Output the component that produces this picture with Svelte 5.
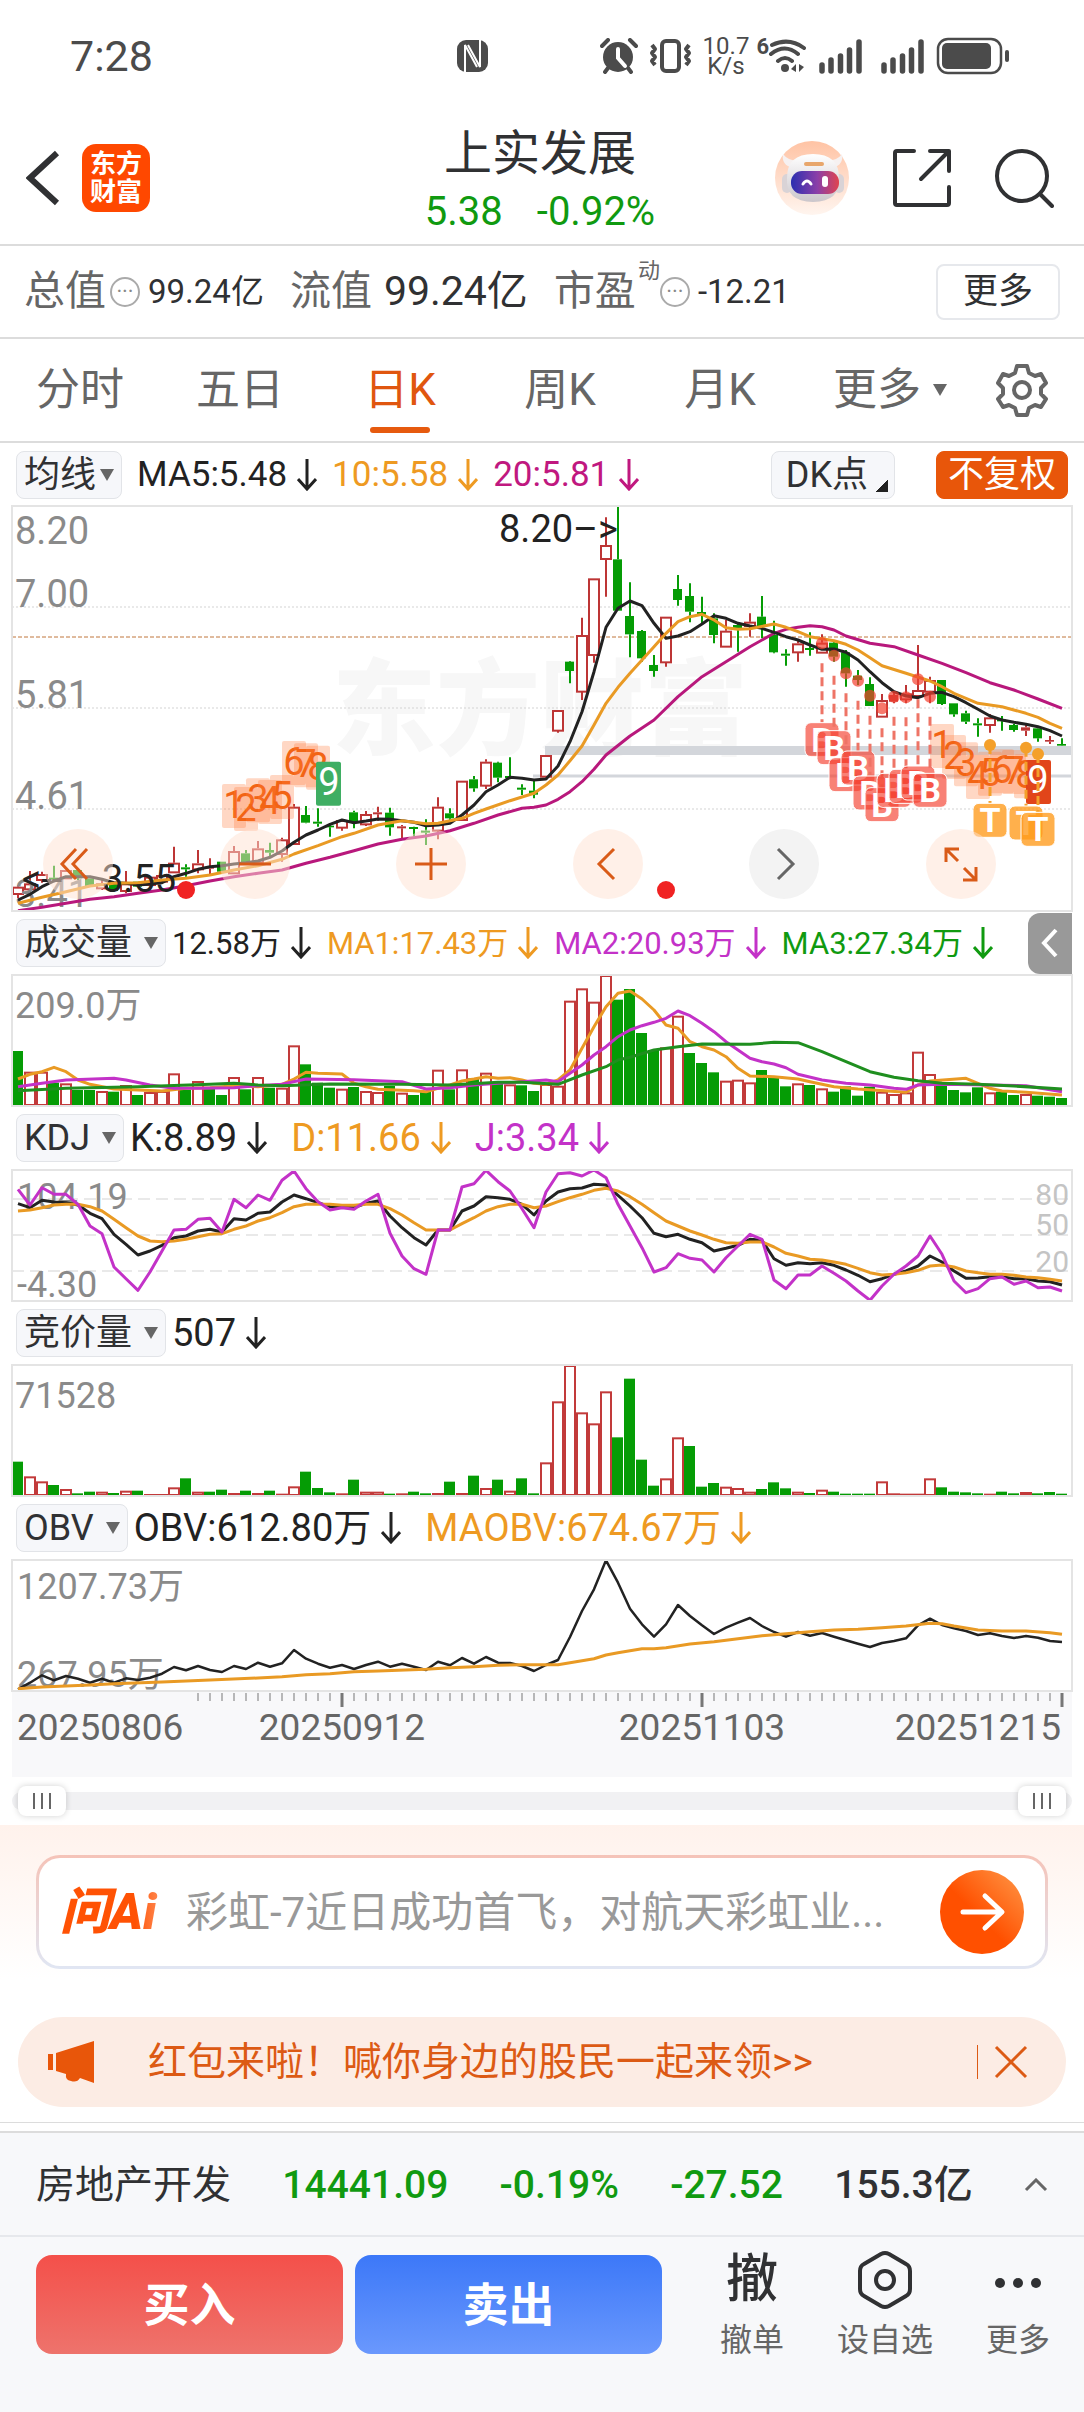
<script>
  const STEP = 12; // distance between two candles
  const cx = i => 6 + i * STEP;

  let tab = $state('日K'),
      from = $state(0),
      to = $state(100),
      question = $state(''),
      banner = $state(true);

  const tabs = ['分时', '五日', '日K', '周K', '月K'];

  // [colour, high, top, bottom, low], in thirds of a pixel, main chart starts at 48
  const candles = [
    ['r',1185,1190,1212,1225],['r',1143,1180,1198,1205],['r',1145,1152,1170,1178],['g',1127,1163,1169,1172],
    ['r',1140,1140,1165,1165],['g',1140,1140,1165,1170],['g',1165,1165,1190,1190],['r',1165,1180,1195,1200],
    ['g',1180,1180,1203,1203],['r',1143,1180,1203,1210],['g',1175,1175,1190,1190],['r',1160,1160,1185,1185],
    ['r',1155,1155,1175,1175],['r',1070,1118,1147,1147],['g',1123,1132,1138,1160],['r',1080,1120,1138,1150],
    ['r',1105,1131,1136,1155],['g',1115,1115,1145,1145],['r',1068,1083,1150,1150],['g',1080,1090,1122,1122],
    ['r',1053,1075,1118,1125],['g',1058,1080,1088,1102],['r',1043,1048,1092,1115],['r',942,950,1062,1062],
    ['g',948,975,998,1000],['g',955,995,1001,1010],['g',1005,1007,1012,1040],['r',987,990,1013,1022],
    ['g',962,967,993,1015],['r',963,972,1003,1008],['r',950,967,973,992],['g',953,968,1012,1037],
    ['r',1005,1009,1015,1045],['g',1010,1011,1017,1040],['g',988,1022,1028,1065],['r',922,950,1022,1048],
    ['g',955,970,985,993],['r',872,872,990,990],['g',858,868,895,905],['r',808,815,887,897],
    ['g',815,818,863,877],['g',802,858,864,868],['g',883,893,899,915],['g',870,902,914,925],
    ['r',795,795,860,860],['r',660,660,722,728],['g',513,515,543,580],['r',383,435,605,630],
    ['r',265,265,495,518],['r',82,165,207,320],['g',47,208,362,362],['g',277,378,433,502],
    ['g',420,423,505,515],['g',495,525,543,560],['r',380,380,517,530],['g',255,297,330,347],
    ['g',280,318,365,397],['g',320,366,374,403],['g',370,385,435,460],['r',390,422,470,470],
    ['g',400,405,420,485],['r',370,395,408,440],['g',318,380,408,445],['g',392,435,487,490],
    ['g',478,491,497,527],['r',450,460,487,515],['g',427,474,480,497],['r',433,458,488,488],
    ['g',455,458,500,515],['g',480,487,550,590],['g',540,557,570,585],['g',562,582,648,648],
    ['r',612,630,680,680],['f',605,615,635,640],['r',585,610,628,640],['r',465,600,618,618],
    ['r',560,570,605,640],['g',570,570,642,645],['g',640,640,673,680],['g',662,670,695,702],
    ['g',685,700,706,740],['r',672,682,705,728],['g',678,688,694,722],['g',702,705,720,725],
    ['f',700,712,722,738],['g',712,715,745,755],['f',738,750,755,762],['g',745,762,767,768]
  ];

  const ma5 = [1230,1213,1190,1173,1160,1160,1160,1168,1178,1180,1185,1182,1178,1160,1150,1138,1130,1127,1122,1118,1113,1102,
    1083,1057,1035,1020,1003,990,998,993,987,988,992,997,1007,1005,1000,975,945,905,885,862,865,870,867,828,755,665,545,412,
    355,333,347,400,445,438,425,402,377,385,400,408,415,427,440,450,465,478,477,487,510,545,578,605,618,623,610,607,620,638,
    658,678,690,697,703,710,722,738];
  const ma10 = [[0,1240],[2,1222],[4,1205],[6,1188],[8,1180],[10,1178],[12,1170],[14,1165],[16,1155],[18,1140],[20,1127],[22,1108],
    [23,1092],[25,1067],[27,1040],[28,1030],[30,1005],[32,992],[33,997],[34,1001],[35,1000],[36,992],[37,985],[38,970],[39,957],
    [41,932],[43,910],[44,885],[45,855],[46,812],[47,768],[48,705],[49,640],[50,592],[51,550],[52,510],[53,470],[54,430],[55,395],
    [56,380],[57,373],[58,390],[59,413],[60,418],[61,416],[63,402],[64,412],[65,425],[66,440],[68,452],[69,463],[70,480],[71,503],
    [72,527],[74,550],[76,573],[77,590],[78,610],[80,640],[82,650],[84,670],[85,682],[86,700],[87,715]];
  const ma20 = [[0,1262],[2,1252],[4,1240],[6,1228],[8,1220],[10,1210],[12,1200],[14,1187],[16,1173],[18,1160],[20,1150],[22,1140],
    [24,1120],[26,1102],[28,1082],[30,1062],[32,1048],[34,1038],[36,1022],[38,1000],[40,975],[42,955],[43,952],[44,945],[45,928],
    [46,905],[47,875],[48,838],[49,795],[51,738],[53,690],[55,620],[57,560],[59,515],[61,470],[63,430],[64,418],[65,412],[66,407],
    [67,410],[68,420],[69,438],[71,460],[73,470],[75,495],[77,520],[79,548],[81,578],[83,600],[85,627],[87,655]];

  // nine-turn counters: [candle, label, top]
  const turns = [[18,1,882],[19,2,891],[20,3,865],[21,4,870],[22,5,855],[23,6,753],[24,7,760],[25,8,767],
    [77,1,702],[78,2,735],[79,3,757],[80,4,795],[81,5,785],[82,6,778],[83,7,780],[84,8,793]];
  // buy marks: [candle, dot, badge top]
  const buys = [[67,460,698],[68,497,722],[69,550,803],[70,572,783],[71,617,858],[72,655,893],[73,620,850],[74,622,838],[75,568,828],[76,620,850]];
  const sells = [[81,765,940],[84,773,948],[85,792,967]];

  const volColor = 'grrgrggrgrgrrrgrggrgrgrrggg' + 'rgrrgrggrgrgrgrgg' + 'rrrrrrggggrrgggrrrggg' + 'rgrggggrrrrrggggrggrggg';
  const volume = [162,100,100,67,65,45,45,42,40,60,30,39,42,95,45,72,50,30,84,47,84,52,52,179,122,67,52,49,54,42,39,57,37,30,
    39,106,47,107,80,97,67,62,59,42,63,58,313,350,310,390,316,348,216,165,173,268,156,126,98,73,76,68,105,83,56,65,60,50,40,56,28,55,
    40,33,38,160,93,58,45,38,53,38,40,30,33,28,25,21];
  const vma1 = [[0,78],[1,92],[2,100],[3,113],[4,100],[5,75],[6,62],[8,48],[10,45],[12,42],[14,50],[16,52],[18,58],[20,55],[22,62],
    [23,78],[24,98],[25,95],[27,93],[28,65],[29,55],[30,47],[33,43],[34,40],[35,50],[36,60],[37,72],[38,78],[39,85],[40,80],[41,82],
    [42,75],[43,65],[44,62],[45,75],[46,105],[47,170],[48,235],[49,295],[50,335],[51,342],[52,318],[53,285],[54,240],[55,230],[56,190],
    [57,175],[58,165],[59,145],[60,110],[61,87],[63,85],[65,78],[66,70],[68,55],[70,48],[74,38],[75,60],[76,72],[79,80],[80,65],
    [81,50],[82,42],[84,38],[87,30]];
  const vma2 = [[0,55],[2,65],[4,75],[8,80],[9,75],[11,60],[13,50],[15,50],[18,52],[20,58],[22,62],[24,78],[28,76],[32,70],[34,48],
    [36,52],[38,60],[40,65],[42,70],[44,75],[45,70],[46,95],[47,120],[48,150],[49,175],[50,205],[51,225],[52,238],[53,248],[54,260],
    [55,282],[56,268],[57,245],[58,220],[59,190],[60,165],[61,140],[62,130],[63,123],[64,112],[65,92],[67,75],[69,65],[71,60],[73,50],
    [74,47],[75,60],[77,62],[84,58],[85,52],[87,40]];
  const vma3 = [[0,43],[4,50],[10,55],[16,62],[18,65],[20,60],[22,58],[26,63],[32,62],[36,60],[40,68],[42,68],[45,62],[47,90],[49,115],
    [50,135],[51,143],[53,165],[55,175],[57,183],[61,182],[63,188],[65,187],[67,160],[69,130],[71,100],[73,83],[75,73],[77,65],[80,62],
    [83,57],[87,48]];

  const kdjJ = [835,882,830,850,850,880,945,968,1068,1103,1138,1083,1020,957,955,925,922,963,865,890,852,868,808,780,833,872,897,890,
    895,870,850,967,1035,1073,1090,957,957,828,818,778,812,840,893,950,843,788,785,795,777,800,880,945,1010,1083,1070,1028,1042,1047,
    1083,1040,1005,970,985,1107,1133,1092,1092,1065,1087,1110,1140,1168,1125,1090,1065,1035,975,1030,1110,1145,1133,1103,1098,1120,
    1110,1130,1128,1140];
  const kdjK = [878,890,868,873,875,882,907,923,970,1000,1032,1020,1003,980,975,960,955,963,923,927,907,903,873,852,863,875,887,888,
    890,877,870,915,950,980,1002,957,957,900,885,857,860,865,880,912,870,843,833,831,820,822,853,885,920,967,977,970,985,995,1020,
    1012,1003,985,988,1043,1063,1055,1058,1055,1063,1077,1093,1112,1103,1090,1080,1065,1035,1053,1080,1102,1101,1097,1097,1103,1103,
    1110,1112,1122];
  const kdjD = [900,897,890,882,880,880,887,900,925,950,975,990,992,990,985,977,970,968,955,945,930,920,905,887,880,880,880,883,883,
    880,880,893,912,935,957,957,957,938,920,900,887,880,880,890,885,872,860,850,838,832,840,857,880,905,930,945,960,972,985,995,997,
    993,993,1008,1027,1035,1045,1047,1053,1060,1072,1085,1092,1090,1085,1078,1065,1062,1068,1080,1085,1090,1090,1093,1098,1100,1105,1110];

  const bids = [100,56,41,30,18,5,10,10,6,13,13,3,3,23,50,10,10,16,6,13,6,13,4,26,70,21,8,5,46,10,10,4,5,10,5,6,40,6,58,21,46,13,50,5,
    98,281,390,248,215,311,173,349,106,28,50,173,147,25,36,25,21,10,18,38,20,10,6,16,10,4,4,4,41,5,4,4,50,23,10,8,5,4,10,5,9,5,9,4];
  const bidColor = 'grrgrggrgrgrrrgrggrgrgrrggg' + 'rgrrgrggrgrgrgrgg' + 'rrrrrrggggrrgggrrrggg' + 'rgrggggrrrrrggggrggrggg';

  const obv = [1135,1115,1093,1108,1095,1103,1115,1103,1115,1102,1107,1100,1088,1068,1078,1065,1077,1083,1065,1074,1055,1067,1057,1017,
    1043,1058,1070,1062,1074,1062,1052,1067,1058,1067,1077,1052,1063,1041,1058,1038,1055,1056,1065,1080,1062,1047,978,900,835,748,815,
    893,940,977,940,882,915,943,969,950,935,921,945,963,977,963,974,966,977,988,998,1008,996,990,982,943,923,942,952,960,972,967,975,
    981,975,980,990,993];
  const maobv = [[0,1133],[2,1128],[4,1125],[6,1122],[8,1118],[12,1113],[16,1107],[20,1101],[22,1097],[24,1091],[26,1088],[28,1082],
    [30,1080],[34,1075],[36,1070],[38,1067],[40,1063],[42,1061],[45,1061],[46,1055],[48,1043],[49,1032],[50,1025],[52,1013],[53,1013],
    [54,1010],[56,999],[58,992],[60,983],[62,974],[64,968],[66,962],[68,957],[70,955],[72,950],[74,945],[76,937],[77,938],[78,945],
    [80,957],[82,960],[84,960],[86,965],[87,970]];

  const py = v => v / 3 - 16;
  const full = a => a.map((v, i) => [i, v]);
  const line = (pts, f) => pts.map(([i, v]) => `${cx(i)},${f(v).toFixed(1)}`).join(' ');
  const up = v => 130 - v / 3;     // volume scale
  const kd = v => (v - 777) / 3;   // kdj scale
  const ob = v => (v - 747) / 3;   // obv scale

  const ticks = Array.from({ length: 73 }, (_, n) => n + 15);
</script>

{#snippet arrow()}
  <svg class="arrow" viewBox="0 0 20 32" aria-hidden="true"><path d="M10 0V30M1 20l9 10 9-10" /></svg>
{/snippet}

{#snippet signal()}
  <svg class="signal" width="44" height="36" viewBox="0 0 44 36" aria-hidden="true">
    <path d="M3 27v6M12 22v11M21.500 18v15M30.500 12v21M40 4v29" stroke="#4b4b4b" stroke-width="5.500" stroke-linecap="round" />
  </svg>
{/snippet}

{#snippet bars(values, colors)}
  {#each values as v, i}
    {#if colors[i] === 'g'}
      <rect x={cx(i) - 6} y={up(v)} width="11" height={v / 3} fill="#059c05" />
    {:else}
      <rect x={cx(i) - 5} y={up(v) + 1} width="10" height={Math.max(v / 3 - 1, 1)} fill="#fff" stroke="#c23a3a" stroke-width="2" />
    {/if}
  {/each}
{/snippet}

<div class="page">
  <div class="status">
    <time>7:28</time>
    <svg class="nfc" width="31" height="32" viewBox="0 0 31 32" aria-label="NFC">
      <rect width="31" height="32" rx="9" fill="#4b4b4b" />
      <path d="M8 32V5L20 27M23 0V27L11 5" stroke="#fff" stroke-width="2" fill="none" />
    </svg>
    <div class="right">
      <svg width="38" height="36" viewBox="0 0 38 36" aria-hidden="true">
        <circle cx="18" cy="19" r="15" fill="#4b4b4b" />
        <path d="M2 8l6-6M30 2l6 6M8 30l-3 4M28 30l3 4" stroke="#4b4b4b" stroke-width="4" stroke-linecap="round" />
        <path d="M18 11v9l7 8" stroke="#fff" stroke-width="4" fill="none" stroke-linecap="round" />
      </svg>
      <svg width="43" height="36" viewBox="0 0 43 36" aria-hidden="true" fill="none" stroke="#4b4b4b" stroke-width="4">
        <rect x="13" y="3" width="17" height="30" rx="4" />
        <path d="M3 7l3 4-3 4 3 4-3 4 3 4M40 7l-3 4 3 4-3 4 3 4-3 4" stroke-linejoin="round" />
      </svg>
      <span class="speed">10.7<br />K/s</span>
      <span class="six">6</span>
      <svg width="40" height="36" viewBox="0 0 40 36" aria-hidden="true" fill="none" stroke="#4b4b4b" stroke-width="4" stroke-linecap="round">
        <path d="M4 7q17-8 32 3M3 16q14-11 27 0M10 23q7-6 14 0" />
        <circle cx="17" cy="30" r="4" fill="#4b4b4b" stroke="none" />
        <path d="M23 31l5-5v8ZM36 29l-5-3v8Z" fill="#4b4b4b" stroke="none" />
      </svg>
      {@render signal()}
      {@render signal()}
      <svg width="74" height="38" viewBox="0 0 74 38" aria-hidden="true">
        <rect x="2" y="2" width="63" height="34" rx="10" fill="none" stroke="#4b4b4b" stroke-width="2.500" />
        <rect x="6" y="6" width="49" height="26" rx="5" fill="#4b4b4b" />
        <path d="M71 15v8" stroke="#4b4b4b" stroke-width="4" stroke-linecap="round" />
      </svg>
    </div>
  </div>

  <header>
    <div class="side">
      <button class="plain" aria-label="返回">
        <svg width="34" height="56" viewBox="0 0 34 56"><path d="M31 3L4 28l27 25" fill="none" stroke="#303133" stroke-width="6" /></svg>
      </button>
      <a class="brand" href="#home">东方<br />财富</a>
    </div>
    <div class="title">
      <h1>上实发展</h1>
      <p><span>5.38</span><span>-0.92%</span></p>
    </div>
    <div class="side tools">
      <button class="plain" aria-label="智能助手">
        <svg width="76" height="76" viewBox="0 0 76 76">
          <defs>
            <linearGradient id="peach" x1="0" y1="0" x2="0" y2="1"><stop offset="0" stop-color="#ffc3a4" /><stop offset="1" stop-color="#fff5ef" /></linearGradient>
            <linearGradient id="visor" x1="0" y1="0" x2="1" y2="0"><stop offset="0" stop-color="#2b2fb0" /><stop offset=".55" stop-color="#8b3fa8" /><stop offset="1" stop-color="#e0434f" /></linearGradient>
            <linearGradient id="shell" x1="0" y1="0" x2="0" y2="1"><stop offset="0" stop-color="#fff" /><stop offset="1" stop-color="#cbc6cb" /></linearGradient>
          </defs>
          <circle cx="38" cy="38" r="37" fill="url(#peach)" />
          <path d="M19 28q-12-3-10-14 5 7 16 7ZM58 28q12-3 10-14-5 7-16 7Z" fill="#f6f1f1" />
          <rect x="8" y="34" width="10" height="19" rx="5" fill="#d9d3d6" /><rect x="60" y="34" width="10" height="19" rx="5" fill="#d9d3d6" />
          <path d="M13 38q0-24 26-24t26 24q2 23-26 24-28-1-26-24Z" fill="url(#shell)" />
          <rect x="17" y="31" width="48" height="23" rx="11" fill="url(#visor)" />
          <path d="M29 44q4-6 8 0" fill="none" stroke="#fff" stroke-width="3" stroke-linecap="round" />
          <rect x="48" y="36" width="6" height="11" rx="3" fill="#fff" />
          <rect x="30" y="22" width="20" height="4" rx="2" fill="#e8a66b" />
        </svg>
      </button>
      <button class="plain" aria-label="分享">
        <svg width="60" height="60" viewBox="0 0 60 60" fill="none" stroke="#303133" stroke-width="4" stroke-linecap="round" stroke-linejoin="round">
          <path d="M22 3H5q-2 0-2 2v50q0 2 2 2h50q2 0 2-2V39M38 3h19v20M56 4L29 31" />
        </svg>
      </button>
      <button class="plain" aria-label="搜索">
        <svg width="60" height="60" viewBox="0 0 60 60" fill="none" stroke="#303133" stroke-width="4" stroke-linecap="round">
          <circle cx="28" cy="28" r="25" /><path d="M46 46l12 12" />
        </svg>
      </button>
    </div>
  </header>

  <div class="stats">
    <span class="key">总值</span><i class="tip">···</i><span class="val">99.24亿</span>
    <span class="key next">流值</span><span class="val big">99.24亿</span>
    <span class="key next">市盈</span><sup>动</sup><i class="tip">···</i><span class="val">-12.21</span>
    <button class="more">更多</button>
  </div>

  <nav>
    {#each tabs as t}
      <button class="tab" class:on={tab === t} onclick={() => (tab = t)}>{t}</button>
    {/each}
    <button class="tab">更多<i class="caret"></i></button>
    <button class="tab" aria-label="设置">
      <svg width="54" height="54" viewBox="0 0 54 54" fill="none" stroke="#666" stroke-width="4" stroke-linejoin="round">
        <path d="M22 3h10l2 7 6 3 6-2 5 9-5 5v6l5 5-5 8-6-2-6 3-2 7H22l-2-7-6-3-6 2-5-8 5-5v-6l-5-5 5-9 6 2 6-3Z" />
        <circle cx="27" cy="27" r="8" />
      </svg>
    </button>
  </nav>

  <main>
    <div class="legend">
      <button class="chip tight">均线<i class="caret"></i></button>
      <span class="dark">MA5:5.48{@render arrow()}</span>
      <span class="orange">10:5.58{@render arrow()}</span>
      <span class="plum">20:5.81{@render arrow()}</span>
      <button class="chip dk">DK点</button>
      <button class="chip adjust">不复权</button>
    </div>

    <div class="stage">
      <svg class="plot" viewBox="0 0 1060 405">
        <text x="320" y="241" class="mark">东方财富</text>
        <path d="M0 101H1060M0 202H1060M0 303H1060" stroke="#d3d3d3" stroke-width="1" stroke-dasharray="2 2" />
        <rect x="533" y="240" width="527" height="9" fill="#d3d6db" />
        <path d="M521 270H1060" stroke="#d3d6db" stroke-width="3" />
        <path d="M0 131H1060" stroke="#c0763c" stroke-width="1" stroke-dasharray="4 2" />

        {#each candles as [c, high, top, bottom, low], i}
          {@const color = c === 'g' ? '#059c05' : '#bd3535'}
          <path d="M{cx(i)} {py(high)}V{py(top)}M{cx(i)} {py(bottom)}V{py(low)}" stroke={color} stroke-width="2" />
          {#if c === 'r' && bottom - top > 7}
            <rect x={cx(i) - 5} y={py(top) + 1} width="10" height={(bottom - top) / 3 - 1} fill="#fff" stroke={color} stroke-width="2" />
          {:else}
            <rect x={cx(i) - 5} y={py(top)} width="9" height={(bottom - top) / 3} fill={color} />
          {/if}
        {/each}

        <g class="label">
          <text x="3" y="38">8.20</text>
          <text x="3" y="101">7.00</text>
          <text x="3" y="202">5.81</text>
          <text x="3" y="303">4.61</text>
          <text x="3" y="401">3.41</text>
        </g>

        <g fill="none" stroke-width="3" stroke-linejoin="round">
          <polyline points={line(ma20, py)} stroke="#b8187c" />
          <polyline points={line(full(ma5), py)} stroke="#222" />
          <polyline points={line(ma10, py)} stroke="#e99a24" />
        </g>

        <text x="487" y="36" class="peak">8.20–></text>
        <text x="10" y="386" class="peak">&lt;--</text>
        <text x="90" y="386" class="peak">3.55</text>
        <circle cx="174" cy="384" r="9" fill="#f02222" />
        <circle cx="654" cy="384" r="9" fill="#f02222" />

        {#each turns as [i, n, top]}
          <rect x={cx(i) - 12} y={py(top)} width="24" height="44" rx="2" fill="#ff7a3c" fill-opacity=".3" />
          <text x={cx(i)} y={py(top) + 34} class="turn">{n}</text>
        {/each}
        <rect x={cx(26) - 14} y={py(815)} width="25" height="44" rx="2" fill="#3fae63" />
        <text x={cx(26) - 1} y={py(815) + 33} class="turn end">9</text>
        <rect x={cx(85) - 12} y={py(810)} width="25" height="44" rx="2" fill="#e1451a" />
        <text x={cx(85)} y={py(810) + 33} class="turn end">9</text>

        {#each buys as [i, dot, top]}
          <circle cx={cx(i)} cy={py(dot)} r="6" fill="#f4402f" fill-opacity=".7" />
          <path d="M{cx(i)} {py(dot) + 20}V{py(top)}" stroke="#ee7466" stroke-width="3" stroke-dasharray="9 5" />
          <rect x={cx(i) - 17} y={py(top)} width="34" height="34" rx="6" fill="#f4402f" fill-opacity=".66" stroke="#fff" stroke-width="1" />
          <text x={cx(i)} y={py(top) + 29} class="badge">B</text>
        {/each}
        {#each sells as [i, dot, top]}
          <circle cx={cx(i)} cy={py(dot)} r="6" fill="#f4a02a" />
          <path d="M{cx(i)} {py(dot)}V{py(top)}" stroke="#f4a02a" stroke-width="3" stroke-dasharray="9 5" />
          <rect x={cx(i) - 17} y={py(top)} width="34" height="34" rx="6" fill="#ff9a1a" fill-opacity=".78" stroke="#fff" stroke-width="1" />
          <text x={cx(i)} y={py(top) + 29} class="badge">T</text>
        {/each}
      </svg>

      <div class="controls">
        <button class="round" aria-label="最早"><svg viewBox="0 0 70 70"><path d="M33 20L19 35l14 15M44 20L30 35l14 15" /></svg></button>
        <button class="round" aria-label="缩小"><svg viewBox="0 0 70 70"><path d="M19 35h32" /></svg></button>
        <button class="round" aria-label="放大"><svg viewBox="0 0 70 70"><path d="M19 35h32M35 19v32" /></svg></button>
        <button class="round" aria-label="向左"><svg viewBox="0 0 70 70"><path d="M41 20L26 35l15 15" /></svg></button>
        <button class="round gray" aria-label="向右"><svg viewBox="0 0 70 70"><path d="M29 20l15 15-15 15" /></svg></button>
        <button class="round" aria-label="全屏"><svg viewBox="0 0 70 70"><path d="M20 33V20h13M20 20l12 12M50 38v13H37M50 51L38 39" /></svg></button>
      </div>
    </div>

    <div class="legend sub small">
      <button class="chip">成交量<i class="caret"></i></button>
      <span class="dark">12.58万{@render arrow()}</span>
      <span class="orange">MA1:17.43万{@render arrow()}</span>
      <span class="violet">MA2:20.93万{@render arrow()}</span>
      <span class="green">MA3:27.34万{@render arrow()}</span>
      <button class="drawer" aria-label="展开">
        <svg width="20" height="32" viewBox="0 0 20 32"><path d="M16 3L4 16l12 13" fill="none" stroke="#fff" stroke-width="4" /></svg>
      </button>
    </div>
    <svg class="plot" viewBox="0 0 1060 131">
      {@render bars(volume, volColor)}
      <text x="3" y="43" class="label">209.0万</text>
      <g fill="none" stroke-width="3" stroke-linejoin="round">
        <polyline points={line(vma1, up)} stroke="#e99a24" />
        <polyline points={line(vma2, up)} stroke="#c332c8" />
        <polyline points={line(vma3, up)} stroke="#1f8f1f" />
      </g>
    </svg>

    <div class="legend sub">
      <button class="chip">KDJ<i class="caret"></i></button>
      <span class="dark">K:8.89{@render arrow()}</span>
      <span class="orange">D:11.66{@render arrow()}</span>
      <span class="violet">J:3.34{@render arrow()}</span>
    </div>
    <svg class="plot" viewBox="0 0 1060 131">
      <path d="M0 29H1060M0 65H1060M0 101H1060" stroke="#d3d3d3" stroke-width="1" stroke-dasharray="12 6" />
      <g class="label">
        <text x="5" y="39">104.19</text>
        <text x="5" y="127">-4.30</text>
      </g>
      <g class="scale">
        <text x="1057" y="35">80</text>
        <text x="1057" y="65">50</text>
        <text x="1057" y="102">20</text>
      </g>
      <g fill="none" stroke-width="3" stroke-linejoin="round">
        <polyline points={line(full(kdjK), kd)} stroke="#222" />
        <polyline points={line(full(kdjD), kd)} stroke="#e99a24" />
        <polyline points={line(full(kdjJ), kd)} stroke="#c332c8" />
      </g>
    </svg>

    <div class="legend sub">
      <button class="chip">竞价量<i class="caret"></i></button>
      <span class="dark">507{@render arrow()}</span>
    </div>
    <svg class="plot" viewBox="0 0 1060 131">
      {@render bars(bids, bidColor)}
      <text x="3" y="43" class="label">71528</text>
    </svg>

    <div class="legend sub">
      <button class="chip">OBV<i class="caret"></i></button>
      <span class="dark">OBV:612.80万{@render arrow()}</span>
      <span class="orange">MAOBV:674.67万{@render arrow()}</span>
    </div>
    <svg class="plot" viewBox="0 0 1060 131">
      <g class="label">
        <text x="5" y="39">1207.73万</text>
        <text x="5" y="127">267.95万</text>
      </g>
      <g fill="none" stroke-linejoin="round">
        <polyline points={line(full(obv), ob)} stroke="#222" stroke-width="2.500" />
        <polyline points={line(maobv, ob)} stroke="#e99a24" stroke-width="3" />
      </g>
    </svg>

    <svg class="axis" viewBox="0 0 1060 86">
      {#each ticks as i}
        <path d="M{cx(i)} 2v{i % 30 === 27 ? 14 : 8}" stroke="#777" stroke-width={i % 30 === 27 ? 3 : 1} />
      {/each}
      <text x="5" y="49">20250806</text>
      <text x="330" y="49" text-anchor="middle">20250912</text>
      <text x="690" y="49" text-anchor="middle">20251103</text>
      <text x="1049" y="49" text-anchor="end">20251215</text>
    </svg>

    <div class="range">
      <input type="range" aria-label="开始日期" bind:value={from} />
      <input type="range" aria-label="结束日期" bind:value={to} />
    </div>
  </main>

  <section class="ask">
    <form onsubmit={e => e.preventDefault()}>
      <label for="ask">问Ai</label>
      <input id="ask" bind:value={question} placeholder="彩虹-7近日成功首飞，对航天彩虹业..." />
      <button aria-label="提问">
        <svg width="84" height="84" viewBox="0 0 84 84" fill="none" stroke="#fff" stroke-width="5" stroke-linecap="round" stroke-linejoin="round">
          <path d="M23 42h38M45 26l17 16-17 16" />
        </svg>
      </button>
    </form>
  </section>

  {#if banner}
    <aside>
      <svg width="48" height="42" viewBox="0 0 48 42" fill="#e8560a" aria-hidden="true">
        <path d="M0 13h5v16H0ZM8 12l38-12v42l-14-5q-3 5-9 3-6-1-5-7L8 30Z" />
      </svg>
      <a href="#gift">红包来啦！喊你身边的股民一起来领&gt;&gt;</a>
      <button class="close" aria-label="关闭" onclick={() => (banner = false)}>
        <svg width="34" height="34" viewBox="0 0 34 34"><path d="M2 2l30 30M32 2L2 32" stroke="#dc5a14" stroke-width="3" /></svg>
      </button>
    </aside>
  {/if}

  <footer>
    <button class="sector">
      <span>房地产开发</span>
      <b class="down">14441.09</b>
      <b class="down">-0.19%</b>
      <b class="down">-27.52</b>
      <b>155.3亿</b>
      <svg width="24" height="14" viewBox="0 0 24 14"><path d="M2 12L12 2l10 10" fill="none" stroke="#666" stroke-width="3" /></svg>
    </button>
    <div class="actions">
      <button class="trade buy">买入</button>
      <button class="trade sell">卖出</button>
      <button class="act"><strong>撤</strong>撤单</button>
      <button class="act wide">
        <svg width="56" height="60" viewBox="0 0 56 60" fill="none" stroke="#303133" stroke-width="4" stroke-linejoin="round">
          <path d="M24 4q4-2 8 0l17 10q4 2 4 7v18q0 5-4 7L32 56q-4 2-8 0L7 46q-4-2-4-7V21q0-5 4-7Z" /><circle cx="28" cy="30" r="9" />
        </svg>设自选</button>
      <button class="act">
        <svg width="50" height="60" viewBox="0 0 50 60" fill="#303133"><circle cx="7" cy="33" r="5" /><circle cx="25" cy="33" r="5" /><circle cx="43" cy="33" r="5" /></svg>更多</button>
    </div>
  </footer>
</div>

<style>
  :global(body) { margin: 0; background: #fff; }

  .page {
    font-family: Roboto, "Noto Sans CJK SC", sans-serif;
    color: #303133;
    font-size: 36px;
    line-height: 1;
    min-height: 100vh;
    display: flex;
    flex-direction: column;
  }
  button { font: inherit; color: inherit; border: 0; padding: 0; background: none; cursor: pointer; white-space: nowrap; }
  svg { display: block; flex: none; }
  i { font-style: normal; }

  .status {
    height: 112px;
    padding: 0 74px 0 70px;
    display: flex;
    align-items: center;
    color: #4b4b4b;
  }
  .status time { font-size: 43px; flex: 40; }
  .right { flex: 54; display: flex; justify-content: flex-end; align-items: center; gap: 11px; }
  .signal + .signal { margin-left: 7px; }
  .speed { font-size: 24px; line-height: 20px; text-align: center; }
  .six { font-size: 22px; font-weight: 700; margin: 0 -12px 0 -4px; align-self: flex-start; }

  header {
    height: 132px;
    padding: 0 30px 0 26px;
    display: grid;
    grid-template-columns: 1fr auto 1fr;
    align-items: center;
    border-bottom: 2px solid #dcdcdc;
  }
  .side { display: flex; align-items: center; gap: 22px; }
  .tools { justify-content: flex-end; gap: 42px; }
  .brand {
    width: 68px; height: 68px;
    box-sizing: border-box;
    padding-top: 6px;
    border-radius: 14px;
    background: #ff4800;
    color: #fff;
    font-size: 26px;
    line-height: 28px;
    font-weight: 700;
    text-align: center;
    text-decoration: none;
  }
  .title { text-align: center; padding-top: 8px; }
  h1 { margin: 0; font-size: 48px; font-weight: 400; line-height: 60px; }
  .title p { margin: 0; font-size: 40px; line-height: 56px; color: #109a10; display: flex; justify-content: center; gap: 34px; }

  .stats {
    height: 91px;
    padding: 0 24px;
    display: flex;
    align-items: center;
    border-bottom: 2px solid #dcdcdc;
    white-space: nowrap;
  }
  .key { font-size: 41px; color: #666; }
  .next { margin-left: 26px; }
  .val { font-size: 33px; margin-left: 8px; }
  .val.big { font-size: 41px; margin-left: 12px; }
  .tip {
    width: 26px; height: 26px;
    margin-left: 4px;
    border: 2px solid #aaa;
    border-radius: 50%;
    color: #888;
    font-size: 22px;
    line-height: 26px;
    text-align: center;
  }
  sup { font-size: 22px; color: #666; align-self: flex-start; margin: 14px 0 0 2px; }
  .stats sup + .tip { margin-left: 0; }
  .more { margin-left: auto; width: 124px; height: 56px; border: 2px solid #e6e8ec; border-radius: 8px; font-size: 35px; }

  nav {
    height: 102px;
    padding-right: 20px;
    display: grid;
    grid-template-columns: repeat(5, 160fr) 180fr 84fr;
    border-bottom: 2px solid #dcdcdc;
    color: #666;
  }
  .tab { position: relative; font-size: 44px; display: flex; align-items: center; justify-content: center; }
  .on { color: #e0560f; }
  .on::after { content: ''; position: absolute; bottom: 8px; width: 60px; height: 6px; border-radius: 3px; background: #e65a0f; }
  .caret { border: 7px solid transparent; border-top: 12px solid #666; border-bottom: 0; margin-left: 12px; }

  main { padding: 0 12px; }
  .legend { height: 63px; padding: 0 4px; display: flex; align-items: center; gap: 15px; white-space: nowrap; font-size: 35px; }
  .legend span { display: flex; align-items: center; }
  .sub { height: 64px; gap: 24px; font-size: 38px; }
  .sub .chip + span { margin-left: -18px; }
  .small { gap: 16px; font-size: 31px; padding-right: 0; }
  .small .chip + span { margin-left: -10px; }
  .chip {
    height: 48px;
    padding: 0 7px;
    display: flex;
    align-items: center;
    border: 1px solid #e2e4e8;
    border-radius: 8px;
    background: #f6f7fa;
    font-size: 36px;
  }
  .tight .caret { margin-left: 4px; }
  .dk { margin-left: auto; margin-right: 26px; padding: 0 26px 0 14px; background: linear-gradient(135deg, transparent 50%, #222 50%) right 6px bottom 6px / 12px 12px no-repeat #f6f7fa; }
  .adjust { padding: 0 11px; background: #e8560a; border-color: #e8560a; color: #fff; }
  .arrow { width: 20px; height: 32px; margin-left: 10px; fill: none; stroke: currentColor; stroke-width: 3; }
  .drawer { margin-left: auto; width: 44px; height: 61px; border-radius: 12px 0 0 12px; background: #999; display: flex; align-items: center; justify-content: center; }

  .dark { color: #222; }
  .orange { color: #ee9a22; }
  .plum { color: #c0187f; }
  .violet { color: #c332c8; }
  .green { color: #109a10; }

  .stage { position: relative; }
  .plot { width: 100%; height: auto; outline: 2px solid #e4e4e4; outline-offset: -1px; }
  .label { font-size: 36px; fill: #8a8a8a; }
  .stage .label, .peak { font-size: 38px; }
  .peak { fill: #222; }
  .mark { font-size: 104px; font-weight: 900; fill: #f7f7f7; }
  .turn { font-size: 38px; fill: #f26414; text-anchor: middle; }
  .end { fill: #fff; }
  .badge { font-size: 34px; font-weight: 700; fill: #fff; text-anchor: middle; }
  .scale { font-size: 30px; fill: #c4c4c4; text-anchor: end; }
  .controls { position: absolute; left: 0; right: 0; bottom: 12px; padding: 0 76px 0 31px; display: flex; justify-content: space-between; }
  .round { width: 70px; height: 70px; border-radius: 50%; background: rgb(255 226 210 / 50%); }
  .round svg { fill: none; stroke: #d95b18; stroke-width: 3; }
  .gray { background: #f3f3f3; }
  .gray svg { stroke: #666; }

  .axis { width: 100%; height: auto; background: #f8f8fa; font-size: 37px; fill: #666; }

  .range { height: 48px; display: grid; align-items: center; }
  .range input {
    grid-area: 1 / 1;
    appearance: none;
    width: 100%;
    height: 18px;
    margin: 0;
    padding: 0 6px;
    box-sizing: border-box;
    border-radius: 9px;
    background: #f1f1f3;
  }
  .range input + input { background: none; pointer-events: none; }
  .range input::-webkit-slider-thumb {
    appearance: none;
    pointer-events: auto;
    width: 48px; height: 30px;
    border-radius: 8px;
    background: repeating-linear-gradient(90deg, #666 0 2px, transparent 2px 8px) center / 18px 16px no-repeat #fff;
    box-shadow: 0 0 6px rgb(0 0 0 / 18%);
  }

  .ask { padding: 30px 36px 48px; background: linear-gradient(#fff2ec, #fff 80%); }
  form {
    height: 108px;
    padding: 0 21px;
    display: flex;
    align-items: center;
    border: 3px solid transparent;
    border-radius: 24px;
    background: linear-gradient(#fff, #fff) padding-box, linear-gradient(#f5c3b8, #e0e6f3) border-box;
  }
  label {
    width: 126px;
    font-size: 50px;
    font-weight: 900;
    font-style: italic;
    line-height: 60px;
    color: transparent;
    background: linear-gradient(90deg, #ff5204 60%, #ff9a6a 85%);
    background-clip: text;
  }
  form input { flex: 1; min-width: 0; padding: 0; border: 0; outline: 0; background: none; font: inherit; font-size: 42px; }
  form input::placeholder { color: #999; }
  form button { border-radius: 50%; background: linear-gradient(45deg, #ff5000 45%, #ff9a4a); }

  aside {
    height: 90px;
    margin: 0 18px 16px;
    padding: 0 38px 0 30px;
    display: flex;
    align-items: center;
    border-radius: 45px;
    background: #fcece4;
  }
  aside a { flex: 1; margin-left: 52px; font-size: 39px; color: #dc5a14; text-decoration: none; white-space: nowrap; }
  .close { padding-left: 16px; border-left: 1px solid #dc5a14; }

  footer { flex: 1; border-top: 8px solid #fff; box-shadow: 0 -1px #dcdcdc; background: #f7f8fa; }
  .sector {
    width: 100%;
    height: 106px;
    padding: 2px 36px 0;
    display: flex;
    align-items: center;
    justify-content: space-between;
    border-top: 2px solid #dcdcdc;
    border-bottom: 2px solid #e6e8ec;
    font-size: 39px;
  }
  .sector b { font-weight: 500; }
  .sector .down { color: #109a10; }
  .actions {
    padding: 18px 12px 56px 36px;
    display: flex;
    align-items: flex-start;
  }
  .trade { flex: 1; height: 99px; border-radius: 16px; color: #fff; font-size: 46px; font-weight: 700; }
  .buy { background: linear-gradient(#f4504a, #ee736c); margin-right: 12px; }
  .sell { background: linear-gradient(#3c78f8, #6a98fd); margin-right: 36px; }
  .act { flex: none; width: 108px; height: 106px; display: flex; flex-direction: column; align-items: center; justify-content: space-between; margin-top: -5px; font-size: 32px; color: #666; }
  .act strong { font-size: 52px; line-height: 60px; font-weight: 500; color: #303133; }
  .wide { width: 158px; }
</style>
